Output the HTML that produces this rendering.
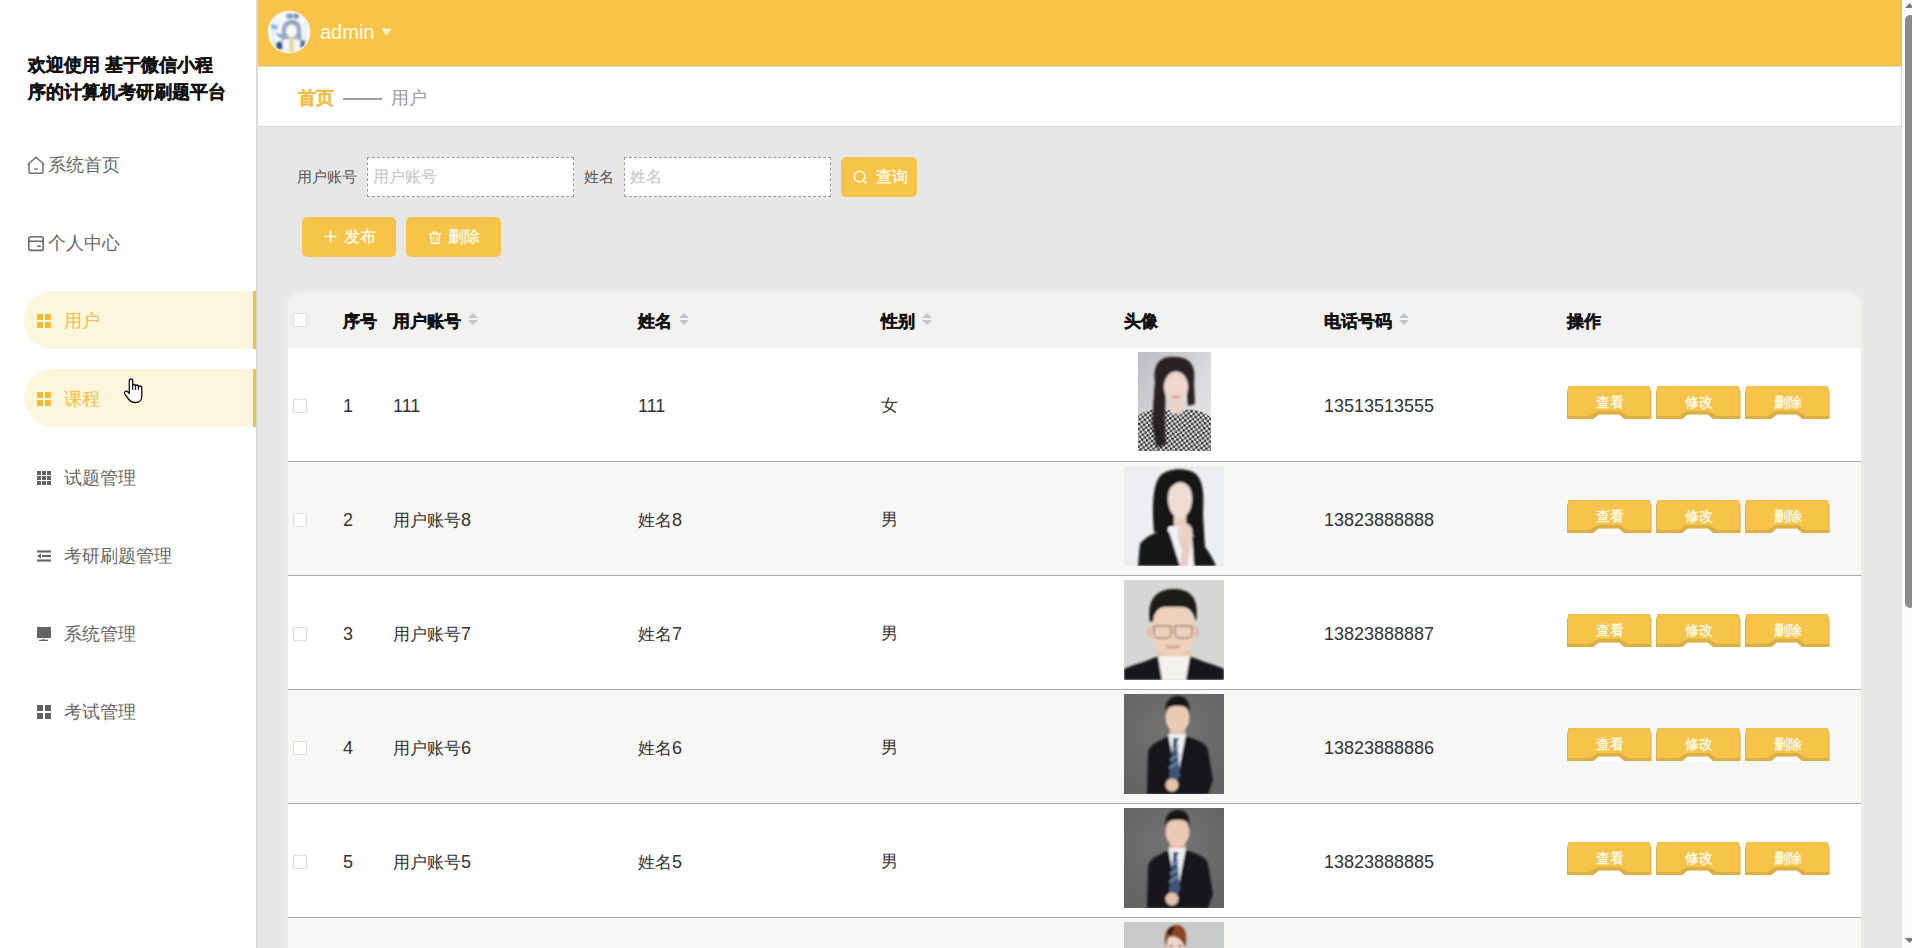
<!DOCTYPE html>
<html><head><meta charset="utf-8">
<style>
*{margin:0;padding:0;box-sizing:border-box}
html,body{width:1912px;height:948px;overflow:hidden;background:#fff;font-family:"Liberation Sans",sans-serif;}
.abs{position:absolute}
.nw{white-space:nowrap}
.title{position:absolute;left:28px;top:52px;font-size:18px;font-weight:bold;color:#111;-webkit-text-stroke:0.35px #111;line-height:26.5px;white-space:nowrap}
.mt{position:absolute;font-size:18px;color:#666;white-space:nowrap;line-height:20px}
.act{position:absolute;left:24px;width:232px;height:58px;background:#fdf6dc;border-radius:29px 0 0 29px;}
.actb{position:absolute;left:253px;width:3px;height:58px;background:#f0c04e}
.th{position:absolute;top:312px;font-size:17px;font-weight:bold;color:#111;-webkit-text-stroke:0.35px #111;white-space:nowrap;line-height:20px}
.td{position:absolute;font-size:17px;color:#333;white-space:nowrap;line-height:20px}
.cb{position:absolute;left:293px;width:14px;height:14px;background:#fff;border:1px solid #dcdcdc;border-radius:1px}
.bl{position:absolute;left:0;top:7px;width:85px;text-align:center;font-size:14px;color:#fffef2;line-height:18px;-webkit-text-stroke:0.3px #fffef2}
.ybtn{position:absolute;background:#f6c449;border-radius:5px;color:#fffdf0;font-size:16px;white-space:nowrap;-webkit-text-stroke:0.25px #fffdf0}
.lbl{position:absolute;font-size:15px;color:#555;white-space:nowrap;line-height:18px}
.inp{position:absolute;top:157px;height:40px;background:#fff;border:1px dashed #9a9a9a}
.ph{position:absolute;top:10px;left:5px;font-size:16px;color:#c0c4cc;white-space:nowrap;line-height:18px}
</style></head>
<body>

<div class="title">欢迎使用 基于微信小程<br>序的计算机考研刷题平台</div>
<div class="act" style="top:291px"></div><div class="actb" style="top:291px"></div>
<div class="act" style="top:369px"></div><div class="actb" style="top:369px"></div>
<svg class="abs" style="left:26px;top:155px" width="20" height="20" viewBox="0 0 20 20"><path d="M2.2,9.2 L10,2.3 L17.8,9.2" fill="none" stroke="#6e6e6e" stroke-width="1.4" stroke-linejoin="miter" stroke-linecap="round"/><path d="M3,8.6 V16.4 Q3,18.2 4.8,18.2 H15.2 Q17,18.2 17,16.4 V8.6" fill="none" stroke="#6e6e6e" stroke-width="1.4"/><path d="M8.2,13.4 Q10,15 11.8,13.4" fill="none" stroke="#6e6e6e" stroke-width="1.3"/></svg>
<div class="mt" style="left:48px;top:155px">系统首页</div>
<svg class="abs" style="left:26px;top:234px" width="20" height="20" viewBox="0 0 20 20"><rect x="2.8" y="2.8" width="14.4" height="13.6" rx="2" fill="none" stroke="#6a6a6a" stroke-width="1.6"/><line x1="2.8" y1="7.3" x2="17.2" y2="7.3" stroke="#6a6a6a" stroke-width="1.6"/><line x1="11.2" y1="12.2" x2="14.8" y2="12.2" stroke="#6a6a6a" stroke-width="1.6"/></svg>
<div class="mt" style="left:48px;top:233px">个人中心</div>
<svg class="abs" style="left:37px;top:314px" width="14" height="14" viewBox="0 0 14 14"><rect x="0" y="0" width="6" height="6" fill="#f2b93a"/><rect x="8" y="0" width="6" height="6" fill="#f2b93a"/><rect x="0" y="8" width="6" height="6" fill="#f2b93a"/><rect x="8" y="8" width="6" height="6" fill="#f2b93a"/></svg>
<div class="mt" style="left:64px;top:311px;color:#f1bd48">用户</div>
<svg class="abs" style="left:37px;top:392px" width="14" height="14" viewBox="0 0 14 14"><rect x="0" y="0" width="6" height="6" fill="#f2b93a"/><rect x="8" y="0" width="6" height="6" fill="#f2b93a"/><rect x="0" y="8" width="6" height="6" fill="#f2b93a"/><rect x="8" y="8" width="6" height="6" fill="#f2b93a"/></svg>
<div class="mt" style="left:64px;top:389px;color:#f1bd48">课程</div>
<svg class="abs" style="left:37px;top:471px" width="14" height="14" viewBox="0 0 14 14"><rect x="0" y="0" width="4" height="4" fill="#626262"/><rect x="5" y="0" width="4" height="4" fill="#626262"/><rect x="10" y="0" width="4" height="4" fill="#626262"/><rect x="0" y="5" width="4" height="4" fill="#626262"/><rect x="5" y="5" width="4" height="4" fill="#626262"/><rect x="10" y="5" width="4" height="4" fill="#626262"/><rect x="0" y="10" width="4" height="4" fill="#626262"/><rect x="5" y="10" width="4" height="4" fill="#626262"/><rect x="10" y="10" width="4" height="4" fill="#626262"/></svg>
<div class="mt" style="left:64px;top:468px">试题管理</div>
<svg class="abs" style="left:37px;top:550px" width="14" height="13" viewBox="0 0 14 13"><rect x="0" y="0.5" width="14" height="2" fill="#626262"/><rect x="5" y="5" width="9" height="2" fill="#626262"/><polygon points="0,6 4,3.5 4,8.5" fill="#626262"/><rect x="0" y="9.5" width="14" height="2" fill="#626262"/></svg>
<div class="mt" style="left:64px;top:546px">考研刷题管理</div>
<svg class="abs" style="left:37px;top:627px" width="14" height="14" viewBox="0 0 14 14"><rect x="0" y="0" width="14" height="11" fill="#626262"/><path d="M2,13.5 H11 M6.5,12 V13.5" stroke="#626262" stroke-width="1.5"/></svg>
<div class="mt" style="left:64px;top:624px">系统管理</div>
<svg class="abs" style="left:37px;top:705px" width="14" height="14" viewBox="0 0 14 14"><rect x="0" y="0" width="6" height="6" fill="#626262"/><rect x="8" y="0" width="6" height="6" fill="#626262"/><rect x="0" y="8" width="6" height="6" fill="#626262"/><rect x="8" y="8" width="6" height="6" fill="#626262"/></svg>
<div class="mt" style="left:64px;top:702px">考试管理</div>
<div class="abs" style="left:256px;top:0;width:2px;height:948px;background:#dadada"></div>
<div class="abs" style="left:258px;top:0;width:1644px;height:66px;background:#f7c449"></div>
<div class="abs" style="left:258px;top:66px;width:1644px;height:1px;background:#d4d4d4"></div>
<svg class="abs" style="left:267px;top:10px" width="44" height="44" viewBox="0 0 44 44">
<defs><clipPath id="cav"><circle cx="22" cy="22" r="20.3"/></clipPath><filter id="avb" x="-10%" y="-10%" width="120%" height="120%"><feGaussianBlur stdDeviation="0.8"/></filter></defs>
<circle cx="22" cy="22" r="21.4" fill="#fff3cf"/>
<g clip-path="url(#cav)"><rect width="44" height="44" fill="#f4f8fb"/>
<g filter="url(#avb)">
<rect x="6" y="5" width="1.2" height="34" fill="#cfe3ee"/><rect x="38" y="5" width="1.2" height="34" fill="#d6e6ee"/>
<ellipse cx="22.5" cy="6" rx="3.2" ry="2.6" fill="#8095b5"/><ellipse cx="29" cy="6" rx="3.2" ry="2.6" fill="#8095b5"/>
<path d="M15,21 C14,7 34,6 34,19 L35,33 L31,36 L24,30 L18,36 L14,33 Z" fill="#98a8c4"/>
<ellipse cx="24.5" cy="21" rx="5.5" ry="6.5" fill="#fbf6f2"/>
<path d="M20,14 C22,10 30,10 31,15 C27,13 23,13 20,16 Z" fill="#8b9dbb"/>
<path d="M12,44 L14,31 C18,28 30,28 35,31 L38,44 Z" fill="#f2f4f8"/>
<path d="M23,28 L26,28 L26.5,44 L22.5,44 Z" fill="#e3d37a"/>
<path d="M4,14 L11,16 L10,20 L4,18 Z" fill="#7bb6d8"/>
<path d="M8,23 L15,25 L14,28 Z" fill="#4e86b0"/>
<path d="M9,33 L15,31 L16,39 L10,40 Z" fill="#2f5a86"/>
<path d="M33,31 L38,30 L38,37 L33,38 Z" fill="#3f77a8"/>
</g></g></svg>
<div class="abs nw" style="left:320px;top:20px;font-size:20px;color:#fffbe6;line-height:24px">admin</div>
<svg class="abs" style="left:381px;top:28px" width="11" height="9" viewBox="0 0 11 9"><polygon points="0.5,0.5 10.5,0.5 5.5,8" fill="#fdf2c8"/></svg>
<div class="abs" style="left:258px;top:67px;width:1643px;height:59px;background:#fff"></div>
<div class="abs" style="left:258px;top:126px;width:1644px;height:1px;background:#d8d8d8"></div>
<div class="abs" style="left:1901px;top:67px;width:1px;height:60px;background:#d8d8d8"></div>
<div class="abs nw" style="left:298px;top:88px;font-size:18px;font-weight:bold;color:#f3bf4c;-webkit-text-stroke:0.35px #f3bf4c;line-height:20px">首页</div>
<div class="abs" style="left:343px;top:98px;width:39px;height:2px;background:#9e9e9e"></div>
<div class="abs nw" style="left:391px;top:88px;font-size:18px;color:#999;line-height:20px">用户</div>
<div class="abs" style="left:258px;top:127px;width:1644px;height:821px;background:#e7e7e7"></div>
<div class="lbl" style="left:297px;top:168px">用户账号</div>
<div class="inp" style="left:367px;width:207px"><span class="ph">用户账号</span></div>
<div class="lbl" style="left:584px;top:168px">姓名</div>
<div class="inp" style="left:624px;width:207px"><span class="ph">姓名</span></div>
<div class="ybtn" style="left:841px;top:157px;width:76px;height:40px"><svg class="abs" style="left:12px;top:13px" width="15" height="15" viewBox="0 0 15 15"><circle cx="6.5" cy="6.5" r="5.3" fill="none" stroke="#fffbea" stroke-width="1.5"/><line x1="10.3" y1="10.3" x2="13.5" y2="13.5" stroke="#fffbea" stroke-width="1.5"/></svg><span class="abs" style="left:35px;top:11px;line-height:18px">查询</span></div>
<div class="ybtn" style="left:302px;top:217px;width:94px;height:40px"><svg class="abs" style="left:22px;top:13px" width="13" height="13" viewBox="0 0 13 13"><path d="M6.5,0.5 V12.5 M0.5,6.5 H12.5" stroke="#fffbea" stroke-width="1.6"/></svg><span class="abs" style="left:42px;top:11px;line-height:18px">发布</span></div>
<div class="ybtn" style="left:406px;top:217px;width:95px;height:40px"><svg class="abs" style="left:22px;top:14px" width="14" height="13" viewBox="0 0 14 13"><path d="M1,3 H13 M5,3 V1.2 H9 V3 M2.5,3 L3.2,12 H10.8 L11.5,3 M5.5,5.5 V10 M8.5,5.5 V10" fill="none" stroke="#fffbea" stroke-width="1.3"/></svg><span class="abs" style="left:42px;top:11px;line-height:18px">删除</span></div>
<div class="abs" style="left:285px;top:290px;width:1579px;height:700px;background:#ebebeb;border-radius:17px 17px 0 0"></div>
<div class="abs" style="left:288px;top:293px;width:1573px;height:655px;background:#fff;border-radius:14px 14px 0 0;overflow:hidden">
<div class="abs" style="left:0;top:0;width:1573px;height:55px;background:#f2f2f0"></div>
<div class="abs" style="left:0;top:55px;width:1573px;height:113px;background:#ffffff"></div>
<div class="abs" style="left:0;top:168px;width:1573px;height:1px;background:#a9a9a9"></div>
<div class="abs" style="left:0;top:169px;width:1573px;height:113px;background:#f7f7f5"></div>
<div class="abs" style="left:0;top:282px;width:1573px;height:1px;background:#a9a9a9"></div>
<div class="abs" style="left:0;top:283px;width:1573px;height:113px;background:#ffffff"></div>
<div class="abs" style="left:0;top:396px;width:1573px;height:1px;background:#a9a9a9"></div>
<div class="abs" style="left:0;top:397px;width:1573px;height:113px;background:#f7f7f5"></div>
<div class="abs" style="left:0;top:510px;width:1573px;height:1px;background:#a9a9a9"></div>
<div class="abs" style="left:0;top:511px;width:1573px;height:113px;background:#ffffff"></div>
<div class="abs" style="left:0;top:624px;width:1573px;height:1px;background:#a9a9a9"></div>
<div class="abs" style="left:0;top:625px;width:1573px;height:113px;background:#f7f7f5"></div>
<div class="abs" style="left:0;top:738px;width:1573px;height:1px;background:#a9a9a9"></div>
</div>
<div class="cb" style="top:313px"></div>
<div class="th" style="left:343px">序号</div>
<div class="th" style="left:393px">用户账号</div><svg class="abs" style="left:468px;top:313px" width="10" height="13" viewBox="0 0 10 13"><polygon points="5,0 10,5 0,5" fill="#c0c4cc"/><polygon points="0,7 10,7 5,12" fill="#c0c4cc"/></svg>
<div class="th" style="left:638px">姓名</div><svg class="abs" style="left:679px;top:313px" width="10" height="13" viewBox="0 0 10 13"><polygon points="5,0 10,5 0,5" fill="#c0c4cc"/><polygon points="0,7 10,7 5,12" fill="#c0c4cc"/></svg>
<div class="th" style="left:881px">性别</div><svg class="abs" style="left:922px;top:313px" width="10" height="13" viewBox="0 0 10 13"><polygon points="5,0 10,5 0,5" fill="#c0c4cc"/><polygon points="0,7 10,7 5,12" fill="#c0c4cc"/></svg>
<div class="th" style="left:1124px">头像</div>
<div class="th" style="left:1324px">电话号码</div><svg class="abs" style="left:1399px;top:313px" width="10" height="13" viewBox="0 0 10 13"><polygon points="5,0 10,5 0,5" fill="#c0c4cc"/><polygon points="0,7 10,7 5,12" fill="#c0c4cc"/></svg>
<div class="th" style="left:1567px">操作</div>
<div class="cb" style="top:399px"></div>
<div class="td" style="left:343px;top:396px"><span style="font-size:18px">1</span></div>
<div class="td" style="left:393px;top:396px"><span style="font-size:18px">111</span></div>
<div class="td" style="left:638px;top:396px"><span style="font-size:18px">111</span></div>
<div class="td" style="left:881px;top:396px">女</div>
<div class="td" style="left:1324px;top:396px"><span style="font-size:18px">13513513555</span></div>
<svg class="abs" style="left:1137.5px;top:352px" width="73" height="99" viewBox="0 0 73 99">
<defs><linearGradient id="g0" x1="0" y1="0" x2="1" y2="1"><stop offset="0" stop-color="#bdbdc1"/><stop offset="0.6" stop-color="#dcdce0"/><stop offset="1" stop-color="#e8e8ea"/></linearGradient>
<pattern id="chk" width="5" height="5" patternUnits="userSpaceOnUse" patternTransform="rotate(8)"><rect width="5" height="5" fill="#e4e4e4"/><rect width="2.5" height="2.5" fill="#303030"/><rect x="2.5" y="2.5" width="2.5" height="2.5" fill="#404040"/></pattern><filter id="bl0" x="-5%" y="-5%" width="110%" height="110%"><feGaussianBlur stdDeviation="0.9"/></filter></defs>
<rect width="73" height="99" fill="url(#g0)"/>
<path d="M0,99 L0,64 C6,58 18,56 30,58 L46,58 C56,56 68,60 73,66 L73,99 Z" fill="url(#chk)"/>
<g filter="url(#bl0)">
<path d="M17,30 C14,8 26,4 38,5 C52,5 58,14 56,30 L57,52 L50,54 L48,34 L28,34 L27,60 L26,92 L18,94 L14,70 Z" fill="#2a2424"/>
<ellipse cx="38" cy="35" rx="12" ry="15.5" fill="#ecd6cf"/>
<path d="M33,46 L44,46 L45,62 L32,62 Z" fill="#ead2c8"/>
<path d="M22,12 C30,4 48,4 54,16 C46,12 34,12 26,20 Z" fill="#2a2424"/>
<path d="M17,30 C16,50 14,60 16,80 L20,96 L28,92 L26,56 L25,30 Z" fill="#2a2424"/>
<path d="M34,44 Q38,46 42,44" stroke="#c06060" stroke-width="1.2" fill="none"/>
</g></svg>
<div class="abs" style="left:1567px;top:386px;width:85px;height:34px">
<svg width="85" height="34" viewBox="0 0 85 34" style="position:absolute;left:0;top:0">
<polygon points="1.5,0 82.5,0 84.5,6 84.5,33 57,33 52,28.8 31.7,28.8 26.5,33 0,33 0,6" fill="#dcae46"/>
<polygon points="2,0.3 82,0.3 83.5,6 83.5,30 60.5,30 53,25 31,25 22.5,30 1,30 1,6" fill="#f6c449"/>
<polygon points="26.5,33.5 31.7,28.8 52,28.8 57,33.5" fill="#ffffff"/>
</svg><span class="bl">查看</span></div>
<div class="abs" style="left:1656px;top:386px;width:85px;height:34px">
<svg width="85" height="34" viewBox="0 0 85 34" style="position:absolute;left:0;top:0">
<polygon points="1.5,0 82.5,0 84.5,6 84.5,33 57,33 52,28.8 31.7,28.8 26.5,33 0,33 0,6" fill="#dcae46"/>
<polygon points="2,0.3 82,0.3 83.5,6 83.5,30 60.5,30 53,25 31,25 22.5,30 1,30 1,6" fill="#f6c449"/>
<polygon points="26.5,33.5 31.7,28.8 52,28.8 57,33.5" fill="#ffffff"/>
</svg><span class="bl">修改</span></div>
<div class="abs" style="left:1745px;top:386px;width:85px;height:34px">
<svg width="85" height="34" viewBox="0 0 85 34" style="position:absolute;left:0;top:0">
<polygon points="1.5,0 82.5,0 84.5,6 84.5,33 57,33 52,28.8 31.7,28.8 26.5,33 0,33 0,6" fill="#dcae46"/>
<polygon points="2,0.3 82,0.3 83.5,6 83.5,30 60.5,30 53,25 31,25 22.5,30 1,30 1,6" fill="#f6c449"/>
<polygon points="26.5,33.5 31.7,28.8 52,28.8 57,33.5" fill="#ffffff"/>
</svg><span class="bl">删除</span></div>
<div class="cb" style="top:513px"></div>
<div class="td" style="left:343px;top:510px"><span style="font-size:18px">2</span></div>
<div class="td" style="left:393px;top:510px">用户账号<span style="font-size:18px">8</span></div>
<div class="td" style="left:638px;top:510px">姓名<span style="font-size:18px">8</span></div>
<div class="td" style="left:881px;top:510px">男</div>
<div class="td" style="left:1324px;top:510px"><span style="font-size:18px">13823888888</span></div>
<svg class="abs" style="left:1124px;top:466px" width="100" height="100" viewBox="0 0 100 100">
<defs><filter id="bl1" x="-5%" y="-5%" width="110%" height="110%"><feGaussianBlur stdDeviation="0.9"/></filter></defs>
<rect width="100" height="100" fill="#eceef2"/>
<g filter="url(#bl1)">
<path d="M30,66 C28,45 28,20 36,10 C42,3 62,0 72,8 C80,16 80,32 79,48 L81,82 L70,84 L66,60 L45,60 L42,68 Z" fill="#141414"/>
<path d="M50,48 L62,48 L62,64 L50,64 Z" fill="#e8cfc4"/>
<ellipse cx="56" cy="33" rx="12" ry="19" fill="#efdcd4"/>
<path d="M44,14 C48,8 64,6 68,16 L66,22 C60,14 52,14 45,24 Z" fill="#141414"/>
<path d="M14,100 L16,78 C22,70 32,66 42,64 L50,70 L58,100 Z" fill="#121212"/>
<path d="M44,62 L58,60 L70,70 L73,100 L56,100 Z" fill="#f2f2f6"/>
<path d="M68,70 C76,72 86,86 92,100 L70,100 Z" fill="#121212"/>
<ellipse cx="61" cy="66" rx="7.5" ry="9" fill="#ebd2c6"/>
<path d="M54,72 L68,70 L66,86 L63,100 L56,100 L58,84 Z" fill="#e8cdc0"/>
</g></svg>
<div class="abs" style="left:1567px;top:500px;width:85px;height:34px">
<svg width="85" height="34" viewBox="0 0 85 34" style="position:absolute;left:0;top:0">
<polygon points="1.5,0 82.5,0 84.5,6 84.5,33 57,33 52,28.8 31.7,28.8 26.5,33 0,33 0,6" fill="#dcae46"/>
<polygon points="2,0.3 82,0.3 83.5,6 83.5,30 60.5,30 53,25 31,25 22.5,30 1,30 1,6" fill="#f6c449"/>
<polygon points="26.5,33.5 31.7,28.8 52,28.8 57,33.5" fill="#ffffff"/>
</svg><span class="bl">查看</span></div>
<div class="abs" style="left:1656px;top:500px;width:85px;height:34px">
<svg width="85" height="34" viewBox="0 0 85 34" style="position:absolute;left:0;top:0">
<polygon points="1.5,0 82.5,0 84.5,6 84.5,33 57,33 52,28.8 31.7,28.8 26.5,33 0,33 0,6" fill="#dcae46"/>
<polygon points="2,0.3 82,0.3 83.5,6 83.5,30 60.5,30 53,25 31,25 22.5,30 1,30 1,6" fill="#f6c449"/>
<polygon points="26.5,33.5 31.7,28.8 52,28.8 57,33.5" fill="#ffffff"/>
</svg><span class="bl">修改</span></div>
<div class="abs" style="left:1745px;top:500px;width:85px;height:34px">
<svg width="85" height="34" viewBox="0 0 85 34" style="position:absolute;left:0;top:0">
<polygon points="1.5,0 82.5,0 84.5,6 84.5,33 57,33 52,28.8 31.7,28.8 26.5,33 0,33 0,6" fill="#dcae46"/>
<polygon points="2,0.3 82,0.3 83.5,6 83.5,30 60.5,30 53,25 31,25 22.5,30 1,30 1,6" fill="#f6c449"/>
<polygon points="26.5,33.5 31.7,28.8 52,28.8 57,33.5" fill="#ffffff"/>
</svg><span class="bl">删除</span></div>
<div class="cb" style="top:627px"></div>
<div class="td" style="left:343px;top:624px"><span style="font-size:18px">3</span></div>
<div class="td" style="left:393px;top:624px">用户账号<span style="font-size:18px">7</span></div>
<div class="td" style="left:638px;top:624px">姓名<span style="font-size:18px">7</span></div>
<div class="td" style="left:881px;top:624px">男</div>
<div class="td" style="left:1324px;top:624px"><span style="font-size:18px">13823888887</span></div>
<svg class="abs" style="left:1124px;top:580px" width="100" height="100" viewBox="0 0 100 100">
<defs><filter id="bl2" x="-5%" y="-5%" width="110%" height="110%"><feGaussianBlur stdDeviation="0.9"/></filter></defs>
<rect width="100" height="100" fill="#d6d7d5"/>
<g filter="url(#bl2)">
<path d="M33,70 L67,70 L70,90 L30,90 Z" fill="#e8c8b0"/>
<ellipse cx="26" cy="52" rx="3.5" ry="6" fill="#e2bca4"/><ellipse cx="72" cy="52" rx="3.5" ry="6" fill="#e2bca4"/>
<ellipse cx="49" cy="50" rx="22" ry="26" fill="#efd0bb"/>
<path d="M26,42 C22,16 36,9 50,9 C66,9 76,18 72,42 L70,36 C68,30 64,27 58,27 L40,27 C34,28 30,32 29,42 Z" fill="#1e1a18"/>
<path d="M0,100 L0,89 C10,84 22,82 34,76 L40,100 Z" fill="#16171b"/>
<path d="M100,100 L100,89 C90,84 78,82 66,76 L60,100 Z" fill="#16171b"/>
<path d="M34,76 L66,76 L62,100 L38,100 Z" fill="#f4f2ee"/>
<path d="M30,46 H47 V54 Q47,58 43,58 H34 Q30,58 30,54 Z M51,46 H68 V54 Q68,58 64,58 H55 Q51,58 51,54 Z" fill="none" stroke="#6a5a50" stroke-width="1"/>
<path d="M42,66 Q49,69 56,66" stroke="#c08070" stroke-width="1.5" fill="none"/>
</g></svg>
<div class="abs" style="left:1567px;top:614px;width:85px;height:34px">
<svg width="85" height="34" viewBox="0 0 85 34" style="position:absolute;left:0;top:0">
<polygon points="1.5,0 82.5,0 84.5,6 84.5,33 57,33 52,28.8 31.7,28.8 26.5,33 0,33 0,6" fill="#dcae46"/>
<polygon points="2,0.3 82,0.3 83.5,6 83.5,30 60.5,30 53,25 31,25 22.5,30 1,30 1,6" fill="#f6c449"/>
<polygon points="26.5,33.5 31.7,28.8 52,28.8 57,33.5" fill="#ffffff"/>
</svg><span class="bl">查看</span></div>
<div class="abs" style="left:1656px;top:614px;width:85px;height:34px">
<svg width="85" height="34" viewBox="0 0 85 34" style="position:absolute;left:0;top:0">
<polygon points="1.5,0 82.5,0 84.5,6 84.5,33 57,33 52,28.8 31.7,28.8 26.5,33 0,33 0,6" fill="#dcae46"/>
<polygon points="2,0.3 82,0.3 83.5,6 83.5,30 60.5,30 53,25 31,25 22.5,30 1,30 1,6" fill="#f6c449"/>
<polygon points="26.5,33.5 31.7,28.8 52,28.8 57,33.5" fill="#ffffff"/>
</svg><span class="bl">修改</span></div>
<div class="abs" style="left:1745px;top:614px;width:85px;height:34px">
<svg width="85" height="34" viewBox="0 0 85 34" style="position:absolute;left:0;top:0">
<polygon points="1.5,0 82.5,0 84.5,6 84.5,33 57,33 52,28.8 31.7,28.8 26.5,33 0,33 0,6" fill="#dcae46"/>
<polygon points="2,0.3 82,0.3 83.5,6 83.5,30 60.5,30 53,25 31,25 22.5,30 1,30 1,6" fill="#f6c449"/>
<polygon points="26.5,33.5 31.7,28.8 52,28.8 57,33.5" fill="#ffffff"/>
</svg><span class="bl">删除</span></div>
<div class="cb" style="top:741px"></div>
<div class="td" style="left:343px;top:738px"><span style="font-size:18px">4</span></div>
<div class="td" style="left:393px;top:738px">用户账号<span style="font-size:18px">6</span></div>
<div class="td" style="left:638px;top:738px">姓名<span style="font-size:18px">6</span></div>
<div class="td" style="left:881px;top:738px">男</div>
<div class="td" style="left:1324px;top:738px"><span style="font-size:18px">13823888886</span></div>
<svg class="abs" style="left:1124px;top:694px" width="100" height="100" viewBox="0 0 100 100">
<defs><radialGradient id="gb3" cx="50%" cy="40%" r="70%"><stop offset="0" stop-color="#747474"/><stop offset="1" stop-color="#636363"/></radialGradient><filter id="bl3" x="-5%" y="-5%" width="110%" height="110%"><feGaussianBlur stdDeviation="0.9"/></filter></defs>
<rect width="100" height="100" fill="url(#gb3)"/>
<g filter="url(#bl3)">
<path d="M46,33 L61,33 L62,44 L45,44 Z" fill="#e0b8a0"/>
<ellipse cx="53.5" cy="24" rx="12" ry="14.5" fill="#ebcab4"/>
<path d="M42,18 C40,6 48,2 54,2 C62,2 67,8 65,19 L63,14 C58,11 49,11 44,14 Z" fill="#181818"/>
<path d="M23,100 L24,58 C26,50 34,48 44,42 L53,48 L62,42 C72,46 82,48 84,56 L89,86 L84,100 Z" fill="#17181c"/>
<path d="M44,40 L62,40 L53,86 Z" fill="#f0f0f2"/>
<path d="M49,44 L55,44 L53,49 L56,82 L48,94 L45,84 L49,50 Z" fill="#3e5677"/>
<path d="M47,58 L55,52 M46,66 L56,60 M45,74 L55,68" stroke="#7f9dc0" stroke-width="1.4"/>
<ellipse cx="48" cy="91" rx="6.5" ry="6.5" fill="#e4c2ac"/>
</g></svg>
<div class="abs" style="left:1567px;top:728px;width:85px;height:34px">
<svg width="85" height="34" viewBox="0 0 85 34" style="position:absolute;left:0;top:0">
<polygon points="1.5,0 82.5,0 84.5,6 84.5,33 57,33 52,28.8 31.7,28.8 26.5,33 0,33 0,6" fill="#dcae46"/>
<polygon points="2,0.3 82,0.3 83.5,6 83.5,30 60.5,30 53,25 31,25 22.5,30 1,30 1,6" fill="#f6c449"/>
<polygon points="26.5,33.5 31.7,28.8 52,28.8 57,33.5" fill="#ffffff"/>
</svg><span class="bl">查看</span></div>
<div class="abs" style="left:1656px;top:728px;width:85px;height:34px">
<svg width="85" height="34" viewBox="0 0 85 34" style="position:absolute;left:0;top:0">
<polygon points="1.5,0 82.5,0 84.5,6 84.5,33 57,33 52,28.8 31.7,28.8 26.5,33 0,33 0,6" fill="#dcae46"/>
<polygon points="2,0.3 82,0.3 83.5,6 83.5,30 60.5,30 53,25 31,25 22.5,30 1,30 1,6" fill="#f6c449"/>
<polygon points="26.5,33.5 31.7,28.8 52,28.8 57,33.5" fill="#ffffff"/>
</svg><span class="bl">修改</span></div>
<div class="abs" style="left:1745px;top:728px;width:85px;height:34px">
<svg width="85" height="34" viewBox="0 0 85 34" style="position:absolute;left:0;top:0">
<polygon points="1.5,0 82.5,0 84.5,6 84.5,33 57,33 52,28.8 31.7,28.8 26.5,33 0,33 0,6" fill="#dcae46"/>
<polygon points="2,0.3 82,0.3 83.5,6 83.5,30 60.5,30 53,25 31,25 22.5,30 1,30 1,6" fill="#f6c449"/>
<polygon points="26.5,33.5 31.7,28.8 52,28.8 57,33.5" fill="#ffffff"/>
</svg><span class="bl">删除</span></div>
<div class="cb" style="top:855px"></div>
<div class="td" style="left:343px;top:852px"><span style="font-size:18px">5</span></div>
<div class="td" style="left:393px;top:852px">用户账号<span style="font-size:18px">5</span></div>
<div class="td" style="left:638px;top:852px">姓名<span style="font-size:18px">5</span></div>
<div class="td" style="left:881px;top:852px">男</div>
<div class="td" style="left:1324px;top:852px"><span style="font-size:18px">13823888885</span></div>
<svg class="abs" style="left:1124px;top:808px" width="100" height="100" viewBox="0 0 100 100">
<defs><radialGradient id="gb4" cx="50%" cy="40%" r="70%"><stop offset="0" stop-color="#747474"/><stop offset="1" stop-color="#636363"/></radialGradient><filter id="bl4" x="-5%" y="-5%" width="110%" height="110%"><feGaussianBlur stdDeviation="0.9"/></filter></defs>
<rect width="100" height="100" fill="url(#gb4)"/>
<g filter="url(#bl4)">
<path d="M46,33 L61,33 L62,44 L45,44 Z" fill="#e0b8a0"/>
<ellipse cx="53.5" cy="24" rx="12" ry="14.5" fill="#ebcab4"/>
<path d="M42,18 C40,6 48,2 54,2 C62,2 67,8 65,19 L63,14 C58,11 49,11 44,14 Z" fill="#181818"/>
<path d="M23,100 L24,58 C26,50 34,48 44,42 L53,48 L62,42 C72,46 82,48 84,56 L89,86 L84,100 Z" fill="#17181c"/>
<path d="M44,40 L62,40 L53,86 Z" fill="#f0f0f2"/>
<path d="M49,44 L55,44 L53,49 L56,82 L48,94 L45,84 L49,50 Z" fill="#3e5677"/>
<path d="M47,58 L55,52 M46,66 L56,60 M45,74 L55,68" stroke="#7f9dc0" stroke-width="1.4"/>
<ellipse cx="48" cy="91" rx="6.5" ry="6.5" fill="#e4c2ac"/>
</g></svg>
<div class="abs" style="left:1567px;top:842px;width:85px;height:34px">
<svg width="85" height="34" viewBox="0 0 85 34" style="position:absolute;left:0;top:0">
<polygon points="1.5,0 82.5,0 84.5,6 84.5,33 57,33 52,28.8 31.7,28.8 26.5,33 0,33 0,6" fill="#dcae46"/>
<polygon points="2,0.3 82,0.3 83.5,6 83.5,30 60.5,30 53,25 31,25 22.5,30 1,30 1,6" fill="#f6c449"/>
<polygon points="26.5,33.5 31.7,28.8 52,28.8 57,33.5" fill="#ffffff"/>
</svg><span class="bl">查看</span></div>
<div class="abs" style="left:1656px;top:842px;width:85px;height:34px">
<svg width="85" height="34" viewBox="0 0 85 34" style="position:absolute;left:0;top:0">
<polygon points="1.5,0 82.5,0 84.5,6 84.5,33 57,33 52,28.8 31.7,28.8 26.5,33 0,33 0,6" fill="#dcae46"/>
<polygon points="2,0.3 82,0.3 83.5,6 83.5,30 60.5,30 53,25 31,25 22.5,30 1,30 1,6" fill="#f6c449"/>
<polygon points="26.5,33.5 31.7,28.8 52,28.8 57,33.5" fill="#ffffff"/>
</svg><span class="bl">修改</span></div>
<div class="abs" style="left:1745px;top:842px;width:85px;height:34px">
<svg width="85" height="34" viewBox="0 0 85 34" style="position:absolute;left:0;top:0">
<polygon points="1.5,0 82.5,0 84.5,6 84.5,33 57,33 52,28.8 31.7,28.8 26.5,33 0,33 0,6" fill="#dcae46"/>
<polygon points="2,0.3 82,0.3 83.5,6 83.5,30 60.5,30 53,25 31,25 22.5,30 1,30 1,6" fill="#f6c449"/>
<polygon points="26.5,33.5 31.7,28.8 52,28.8 57,33.5" fill="#ffffff"/>
</svg><span class="bl">删除</span></div>
<div class="cb" style="top:969px"></div>
<div class="td" style="left:343px;top:966px"><span style="font-size:18px">6</span></div>
<div class="td" style="left:393px;top:966px">用户账号<span style="font-size:18px">4</span></div>
<div class="td" style="left:638px;top:966px">姓名<span style="font-size:18px">4</span></div>
<div class="td" style="left:881px;top:966px">女</div>
<div class="td" style="left:1324px;top:966px"><span style="font-size:18px">13823888884</span></div>
<svg class="abs" style="left:1124px;top:922px" width="100" height="100" viewBox="0 0 100 100">
<defs><filter id="bl5" x="-5%" y="-5%" width="110%" height="110%"><feGaussianBlur stdDeviation="0.9"/></filter></defs>
<rect width="100" height="100" fill="#c9cbca"/>
<g filter="url(#bl5)">
<ellipse cx="51" cy="27" rx="10" ry="14" fill="#f0d4cc"/>
<path d="M41,20 C40,6 48,3 53,3 C60,3 63,10 62,20 L61,26 C58,16 50,12 44,16 L42,26 Z" fill="#8a4424"/>
<path d="M43,10 C45,5 49,4 51,5 L46,14 Z" fill="#2a1a12"/>
<path d="M45,24 H49 M54,24 H58" stroke="#3a2a22" stroke-width="1.2"/>
</g></svg>
<div class="abs" style="left:1902px;top:0;width:10px;height:948px;background:#fbfbfb"></div>
<div class="abs" style="left:1905px;top:15px;width:10px;height:593px;background:#8c8c8c;border-radius:5px"></div>
<svg class="abs" style="left:1904px;top:2px" width="8" height="7" viewBox="0 0 8 7"><polygon points="5.5,1 10,6 1,6" fill="#7a7a7a"/></svg>
<svg class="abs" style="left:1904px;top:937px" width="8" height="7" viewBox="0 0 8 7"><polygon points="1,1 10,1 5.5,6" fill="#7a7a7a"/></svg>
<svg class="abs" style="left:122px;top:377px" width="24" height="28" viewBox="0 0 24 28"><path d="M7.3,16.5 V3.7 Q7.3,2 9,2 Q10.7,2 10.7,3.7 V8.8 Q10.9,7.5 12.1,7.5 Q13.5,7.5 13.5,9 Q13.7,8 14.9,8 Q16.3,8 16.3,9.6 Q16.6,9 18,9 Q19.8,9 19.8,11 V19 Q19.8,25.5 13.5,25.5 Q9,25.5 6.5,22 L2.7,16.8 Q2,15.2 3.4,14.3 Q4.8,13.6 6,15 Z" fill="#fff" stroke="#111" stroke-width="1.3" stroke-linejoin="round"/><path d="M10.7,8.8 V13 M13.5,9 V13 M16.3,9.6 V13" stroke="#111" stroke-width="1.1"/></svg>
</body></html>
